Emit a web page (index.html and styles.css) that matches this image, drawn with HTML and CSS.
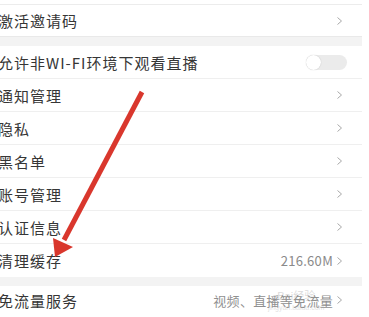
FILE: index.html
```html
<!DOCTYPE html>
<html lang="zh-CN">
<head>
<meta charset="utf-8">
<title>设置</title>
<link rel="stylesheet" href="styles.css">
</head>
<body>
<div class="page">
  <div class="top-edge"></div>
  <div class="row first"><span class="label">激活邀请码</span><span class="right"><svg class="chev" viewBox="0 0 5 8"><polyline points="0.5,0.5 4.5,4 0.5,7.5"/></svg></span></div>
  <div class="band"></div>
  <div class="row"><span class="label">允许非WI-FI环境下观看直播</span><span class="right"><span class="toggle"><span class="knob"></span></span></span></div>
  <div class="row"><span class="label">通知管理</span><span class="right"><svg class="chev" viewBox="0 0 5 8"><polyline points="0.5,0.5 4.5,4 0.5,7.5"/></svg></span></div>
  <div class="row"><span class="label">隐私</span><span class="right"><svg class="chev" viewBox="0 0 5 8"><polyline points="0.5,0.5 4.5,4 0.5,7.5"/></svg></span></div>
  <div class="row"><span class="label">黑名单</span><span class="right"><svg class="chev" viewBox="0 0 5 8"><polyline points="0.5,0.5 4.5,4 0.5,7.5"/></svg></span></div>
  <div class="row"><span class="label">账号管理</span><span class="right"><svg class="chev" viewBox="0 0 5 8"><polyline points="0.5,0.5 4.5,4 0.5,7.5"/></svg></span></div>
  <div class="row"><span class="label">认证信息</span><span class="right"><svg class="chev" viewBox="0 0 5 8"><polyline points="0.5,0.5 4.5,4 0.5,7.5"/></svg></span></div>
  <div class="row last"><span class="label">清理缓存</span><span class="right"><span class="value">216.60M</span><svg class="chev" viewBox="0 0 5 8"><polyline points="0.5,0.5 4.5,4 0.5,7.5"/></svg></span></div>
  <div class="band short"></div>
  <div class="row bottom"><span class="label">免流量服务</span><span class="right"><span class="value small">视频、直播等免流量</span><svg class="chev" viewBox="0 0 5 8"><polyline points="0.5,0.5 4.5,4 0.5,7.5"/></svg></span></div>

  <div class="watermark"><span class="wm-logo">Bai<b>经验</b></span><span class="wm-url">jingyan.baidu.com</span></div>
  <svg class="arrow" viewBox="0 0 369 317" width="369" height="317">
    <line x1="142" y1="92" x2="64" y2="240" stroke="#d9372d" stroke-width="5"/>
    <polygon points="53,238 73,247 55,257" fill="#d9372d"/>
  </svg>
</div>
</body>
</html>
```
FILE: styles.css
```css
html, body {
  margin: 0;
  padding: 0;
  background: #ffffff;
}
body {
  width: 369px;
  height: 317px;
  overflow: hidden;
  font-family: "Noto Sans CJK SC", "Noto Sans", sans-serif;
}
.page {
  position: relative;
  width: 362px;
  height: 317px;
  background: #ffffff;
}
.top-edge {
  height: 4px;
  border-bottom: 1px solid #ececec;
}
.row {
  display: flex;
  align-items: center;
  justify-content: space-between;
  height: 32px;
  border-bottom: 1px solid #efefef;
  padding-right: 20px;
}
.row.first {
  height: 31px;
  border-bottom: none;
}
.row.last {
  border-bottom: none;
  height: 33px;
}
.row.bottom {
  border-bottom: none;
  height: 28px;
}
.label {
  margin-left: -2px;
  font-size: 15px;
  letter-spacing: 1px;
  color: #363636;
  white-space: nowrap;
}
.right {
  display: flex;
  align-items: center;
  gap: 4px;
}
.value {
  font-size: 13px;
  color: #8a8a8a;
  letter-spacing: 0.3px;
}
.value.small {
  font-size: 13px;
  color: #909090;
  letter-spacing: 0.3px;
}
.chev {
  width: 5px;
  height: 8px;
  fill: none;
  stroke: #a8a8a8;
  stroke-width: 1;
}
.band {
  height: 10px;
  background: #f3f3f3;
  border-top: 1px solid #e9e9e9;
  box-sizing: border-box;
}
.band.short {
  height: 9px;
  border-top: none;
}
.toggle {
  position: relative;
  display: block;
  width: 41px;
  height: 15px;
  border-radius: 8px;
  background: #ebebeb;
  margin-right: -5px;
}
.knob {
  position: absolute;
  left: 0;
  top: 0;
  width: 15px;
  height: 15px;
  border-radius: 50%;
  background: #ffffff;
  box-shadow: 0 0 1px rgba(0, 0, 0, 0.25);
}
.watermark {
  position: absolute;
  left: 268px;
  top: 288px;
  display: flex;
  flex-direction: column;
  align-items: center;
  opacity: 0.35;
  pointer-events: none;
}
.wm-logo {
  font-family: "Liberation Sans", sans-serif;
  font-size: 11px;
  color: #9a9a9a;
  line-height: 14px;
}
.wm-logo b {
  font-family: "Noto Sans CJK SC", sans-serif;
  font-weight: normal;
}
.wm-url {
  font-family: "Liberation Sans", sans-serif;
  font-size: 7px;
  color: #aaaaaa;
  line-height: 9px;
}
.arrow {
  position: absolute;
  left: 0;
  top: 0;
  pointer-events: none;
}
```
